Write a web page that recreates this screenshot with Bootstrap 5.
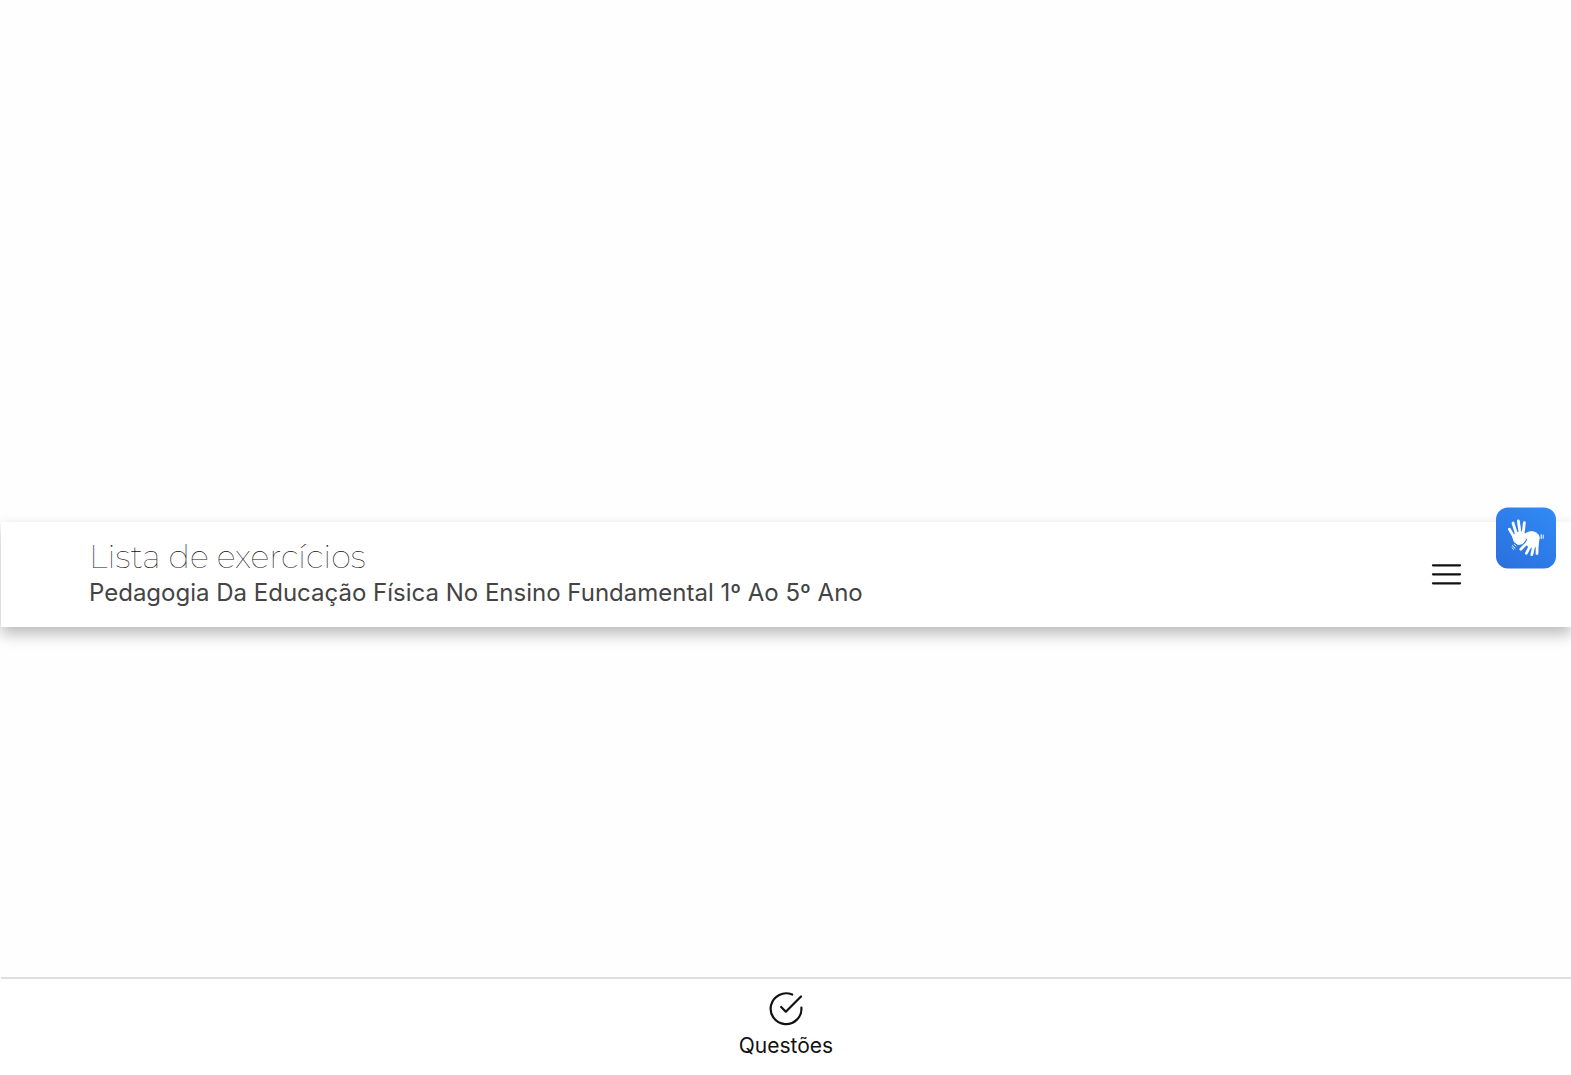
<!DOCTYPE html>
<html lang="pt-BR">
<head>
<meta charset="utf-8">
<meta name="viewport" content="width=device-width, initial-scale=1">
<title>Lista de exercícios</title>
<link href="https://cdn.jsdelivr.net/npm/bootstrap@5.3.0/dist/css/bootstrap.min.css" rel="stylesheet">
<style>
body { background: #fefefe; font-family: Inter, "Liberation Sans", sans-serif; color: #111; }
.page { padding-left: 1px; }
.space-above { flex: 67 1 0; }
.space-below { flex: 45 1 0; }
.topbar { background: #fff; padding: 16px 108px 16px 88px; box-shadow: 0 7px 14px rgba(0, 0, 0, .27); }
.topbar-title { font-family: Montserrat, Inter, sans-serif; font-weight: 100; font-size: 32px; line-height: 37px; color: #111; }
.topbar-subtitle { font-size: 24px; line-height: 36px; color: #444; }
.tabbar { background: #fff; border-top: 2px solid #dedede; height: 98px; }
.tab-link { color: #111; font-size: 21px; line-height: 28px; padding-top: 12px; gap: 5px; }
.sign-button { top: 50%; right: 15px; width: 60px; height: 61px; transform: translateY(-50%); border-radius: 12px; background: linear-gradient(215deg, #318bf6, #2a6fdd); }
</style>
</head>
<body>
<div class="page d-flex flex-column min-vh-100">
  <div class="space-above"></div>
  <header class="topbar d-flex align-items-center justify-content-between">
    <div>
      <h1 class="topbar-title m-0">Lista de exercícios</h1>
      <p class="topbar-subtitle m-0">Pedagogia Da Educação Física No Ensino Fundamental 1º Ao 5º Ano</p>
    </div>
    <button type="button" class="btn p-0 border-0 d-flex" aria-label="Menu">
      <svg width="32" height="32" viewBox="0 0 32 32" fill="none" stroke="#111" stroke-width="2.3" stroke-linecap="round"><path d="M2 7.3H29M2 16.3H29M2 25.3H29"/></svg>
    </button>
  </header>
  <main class="space-below"></main>
  <nav class="tabbar d-flex justify-content-center">
    <a href="#" class="tab-link d-flex flex-column align-items-center text-decoration-none">
      <svg width="36" height="36" viewBox="0 0 36 36" fill="none" stroke="#111" stroke-width="2.2" stroke-linecap="round" stroke-linejoin="round"><path d="M24.2 3.6A15.4 15.4 0 1 0 33.4 16.5M33 5.5 17.8 20.7 13.2 16"/></svg>
      <span>Questões</span>
    </a>
  </nav>
</div>
<button type="button" class="sign-button btn border-0 p-0 position-fixed d-flex align-items-center justify-content-center" aria-label="Libras">
  <svg width="60" height="61" viewBox="0 0 60 61" fill="none" stroke="#fff" stroke-linecap="round" stroke-linejoin="round">
    <path d="M19.5 32 13.4 21.8M21.5 30 17 15.5M24.5 28 22.3 13.3M26.8 28.5 28.4 15.2" stroke-width="2.8"/>
    <path d="M17 29.5 20 25 26.5 24.5 28.5 26 24.6 27.5 23.8 30.5 29.8 31.7 26.5 36.2 22 37 18.5 34.5Z" fill="#fff" stroke-width="1"/>
    <path d="M24.5 29.3C28 28.5 30 24.5 34.5 24.2 39 24 43 26 43.2 30.5L41.8 39 33 40 29.8 36 32 31.2C29 30 26.5 31.2 24.7 30.9Z" fill="#fff" stroke-width="1"/>
    <path d="M32 34.5 24.8 41.8M35 37 30.3 45.8M38 37 35.8 47.2M41.2 36 41 46" stroke-width="2.8"/>
    <path d="M45.2 27.2V31.2M47.2 27.6V30.8" stroke-width="1"/>
    <path d="M16.3 38.2 19 40.8M18.4 37 20 38.6M16 40.2 17.6 41.8" stroke-width="1"/>
  </svg>
</button>
<script src="https://cdn.jsdelivr.net/npm/bootstrap@5.3.0/dist/js/bootstrap.bundle.min.js"></script>
</body>
</html>
